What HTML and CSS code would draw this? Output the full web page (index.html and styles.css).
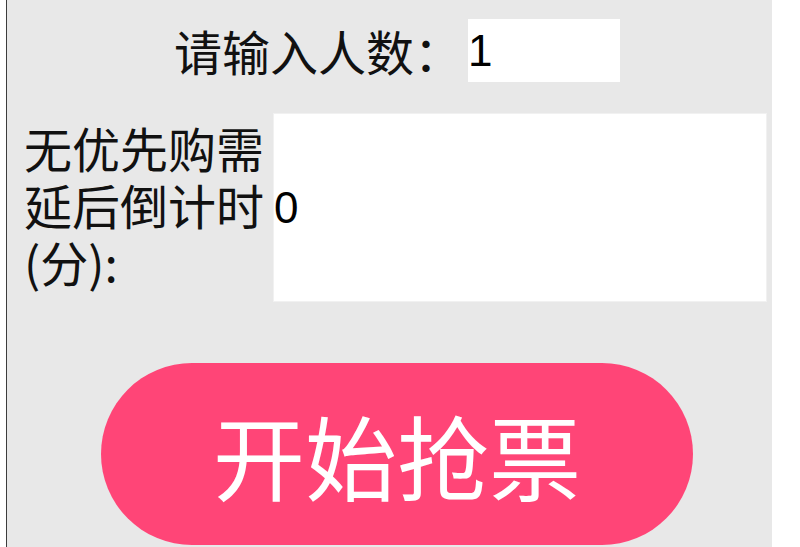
FILE: index.html
```html
<!DOCTYPE html>
<html lang="zh-CN">
<head>
<meta charset="utf-8">
<title>抢票</title>
<link rel="stylesheet" href="styles.css">
</head>
<body>
<div class="panel">
  <div class="inner">
    <div class="row-count">
      <label class="label-count" for="count">请输入人数：</label>
      <input class="input-count" id="count" type="text" value="1">
    </div>
    <div class="row-delay">
      <label class="label-delay" for="delay">无优先购需延后倒计时(分):</label>
      <input class="input-delay" id="delay" type="text" value="0">
    </div>
    <button class="start-btn" type="button">开始抢票</button>
  </div>
</div>
</body>
</html>
```
FILE: styles.css
```css
html, body {
  margin: 0;
  padding: 0;
  background: #ffffff;
}

body {
  font-family: "Noto Sans CJK SC", "Noto Sans", sans-serif;
  color: #111111;
}

.panel {
  margin-left: 6px;
  width: 766px;
  min-height: 547px;
  box-sizing: border-box;
  border-left: 1px solid #3c3c3c;
  background: #e8e8e8;
  overflow: hidden;
}

.inner {
  padding-left: 15px;
  display: flex;
  flex-direction: column;
}

.row-count {
  margin-top: 19px;
  display: flex;
  justify-content: center;
  align-items: center;
  gap: 6px;
}

.label-count {
  font-size: 48px;
  line-height: 63px;
  white-space: nowrap;
}

.input-count,
.input-delay {
  font-family: "Liberation Sans", Arial, sans-serif;
  font-size: 44px;
  color: #000000;
  background: #ffffff;
  padding: 0;
  margin: 0;
  border: none;
  outline: none;
  box-sizing: border-box;
}

.input-count {
  width: 152px;
  height: 63px;
}

.row-delay {
  margin-top: 31px;
  margin-left: 2px;
  display: flex;
  align-items: center;
}

.label-delay {
  width: 249px;
  flex: 0 0 249px;
  font-size: 48px;
  line-height: 57px;
  margin-top: -6px;
}

.input-delay {
  width: 494px;
  height: 189px;
  border: 1px solid #f1f1f1;
}

.start-btn {
  margin: 61px auto 0;
  width: 592px;
  height: 182px;
  border: none;
  border-radius: 91px;
  background: #ff4577;
  color: #ffffff;
  font-family: "Noto Sans CJK SC", "Noto Sans", sans-serif;
  font-size: 92px;
  line-height: 1;
  padding: 0;
  cursor: pointer;
}
```
